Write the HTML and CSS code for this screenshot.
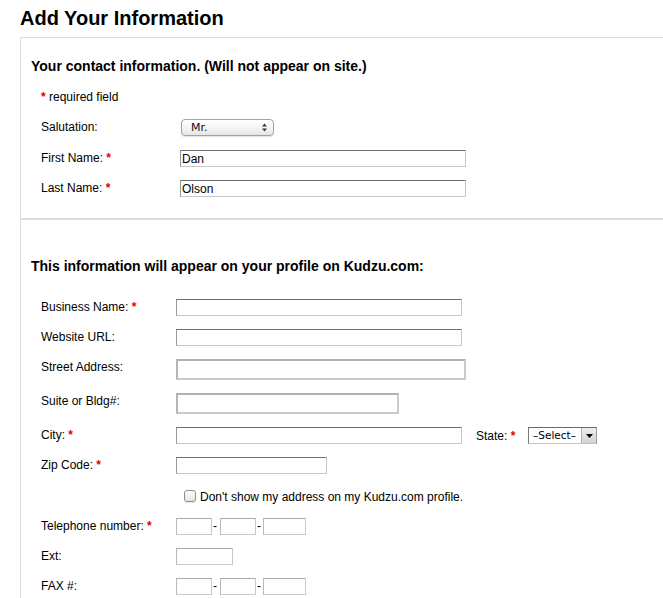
FILE: index.html
```html
<!DOCTYPE html>
<html lang="en">
<head>
<meta charset="utf-8">
<title>Add Your Information</title>
<link rel="stylesheet" href="styles.css">
</head>
<body>
<div class="page">
  <h1 class="title">Add Your Information</h1>
  <div class="panel">
    <section class="sec sec-contact">
      <h2 class="sec-title">Your contact information. (Will not appear on site.)</h2>
      <p class="req-note"><span class="req">*</span> required field</p>
      <div class="rows rows-contact">
        <div class="row row-17 gap-14">
          <span class="lbl">Salutation:</span>
          <div class="mac-select">
            <span class="mac-select-text">Mr.</span>
            <svg class="mac-arrows" width="5" height="9" viewBox="0 0 5 9"><path d="M0 3.6 L2.5 0.4 L5 3.6 Z M0 5.4 L2.5 8.6 L5 5.4 Z" fill="#3a3a3a"/></svg>
          </div>
        </div>
        <div class="row row-17">
          <span class="lbl">First Name: <span class="req">*</span></span>
          <input class="inp w286" type="text" value="Dan">
        </div>
        <div class="row row-17 last">
          <span class="lbl">Last Name: <span class="req">*</span></span>
          <input class="inp w286" type="text" value="Olson">
        </div>
      </div>
    </section>
    <section class="sec sec-profile">
      <h2 class="sec-title">This information will appear on your profile on Kudzu.com:</h2>
      <div class="rows rows-profile">
        <div class="row row-17">
          <span class="lbl">Business Name: <span class="req">*</span></span>
          <input class="inp w286" type="text">
        </div>
        <div class="row row-17">
          <span class="lbl">Website URL:</span>
          <input class="inp w286" type="text">
        </div>
        <div class="row row-21">
          <span class="lbl">Street Address:</span>
          <input class="inp inp-tall w290" type="text">
        </div>
        <div class="row row-21">
          <span class="lbl">Suite or Bldg#:</span>
          <input class="inp inp-tall w223" type="text">
        </div>
        <div class="row row-17">
          <span class="lbl">City: <span class="req">*</span></span>
          <input class="inp w286" type="text">
          <span class="lbl-state">State: <span class="req">*</span></span>
          <div class="win-select">
            <span class="win-select-text">&ndash;Select&ndash;</span>
            <span class="win-select-btn"><svg width="7" height="4" viewBox="0 0 7 4"><path d="M0 0 L7 0 L3.5 4 Z" fill="#000"/></svg></span>
          </div>
        </div>
        <div class="row row-17">
          <span class="lbl">Zip Code: <span class="req">*</span></span>
          <input class="inp w151" type="text">
        </div>
        <div class="row row-check">
          <span class="lbl"></span>
          <span class="check"></span>
          <span class="check-text">Don't show my address on my Kudzu.com profile.</span>
        </div>
        <div class="row row-17">
          <span class="lbl">Telephone number: <span class="req">*</span></span>
          <input class="inp inp-light w36" type="text"><span class="dash">-</span><input class="inp inp-light w36" type="text"><span class="dash dash-narrow">-</span><input class="inp inp-light w43" type="text">
        </div>
        <div class="row row-17">
          <span class="lbl">Ext:</span>
          <input class="inp inp-light w57" type="text">
        </div>
        <div class="row row-17">
          <span class="lbl">FAX #:</span>
          <input class="inp inp-light w36" type="text"><span class="dash">-</span><input class="inp inp-light w36" type="text"><span class="dash dash-narrow">-</span><input class="inp inp-light w43" type="text">
        </div>
      </div>
    </section>
  </div>
</div>
</body>
</html>
```
FILE: styles.css
```css
html, body {
  margin: 0;
  padding: 0;
  background: #fff;
  overflow: hidden;
}
body {
  font-family: "Liberation Sans", Arial, Helvetica, sans-serif;
  font-size: 12px;
  color: #000;
}
.page {
  padding-top: 6px;
}
.title {
  margin: 0 0 7px 20px;
  font-size: 20px;
  line-height: 24px;
  font-weight: bold;
}
.panel {
  margin-left: 20px;
  border-top: 1px solid #dcdcdc;
  border-left: 1px solid #dcdcdc;
}
.sec {
  padding-left: 10px;
}
.sec-contact {
  padding-top: 20px;
  padding-bottom: 21px;
  border-bottom: 2px solid #dcdcdc;
}
.sec-profile {
  padding-top: 38px;
  padding-bottom: 20px;
}
.sec-title {
  margin: 0;
  font-size: 14px;
  line-height: 16px;
  font-weight: bold;
}
.sec-contact .sec-title {
  margin-bottom: 15px;
}
.sec-profile .sec-title {
  margin-bottom: 25px;
}
.req-note {
  margin: 0 0 15px 10px;
  padding-top: 1px;
  line-height: 14px;
}
.req {
  color: #e00000;
  font-weight: bold;
}
.rows {
  margin-left: 10px;
  display: flex;
  flex-direction: column;
  gap: 13px;
}
.row {
  display: flex;
  align-items: flex-start;
}
.row-17 { height: 17px; }
.row-21 { height: 21px; }
.row-check {
  height: 18px;
  align-items: center;
}
.gap-14 { margin-bottom: 1px; }
.lbl {
  flex: none;
  padding-top: 1px;
  line-height: 14px;
}
.rows-contact .lbl { width: 139px; }
.rows-profile .lbl { width: 135px; }

.inp {
  box-sizing: border-box;
  height: 17px;
  margin: 0;
  padding: 0 1px;
  font-family: "Liberation Sans", Arial, Helvetica, sans-serif;
  font-size: 12px;
  color: #000;
  background: #fff;
  border-style: solid;
  border-width: 1px;
  border-color: #6e6e6e #c8c8c8 #c8c8c8 #9a9a9a;
  outline: none;
}
.inp-tall {
  height: 21px;
  border-width: 2px;
  border-color: #b2b2b2 #cacaca #cacaca #b6b6b6;
}
.inp-light {
  border-color: #a9a9a9 #c9c9c9 #c9c9c9 #b9b9b9;
}
.w286 { width: 286px; }
.w290 { width: 290px; }
.w223 { width: 223px; }
.w151 { width: 151px; }
.w36 { width: 36px; }
.w43 { width: 43px; }
.w57 { width: 57px; }

.dash {
  width: 8px;
  flex: none;
  line-height: 17px;
  padding-left: 1px;
  box-sizing: border-box;
}
.dash-narrow { width: 7px; }

.mac-select {
  box-sizing: border-box;
  width: 93px;
  height: 17px;
  margin-left: 1px;
  border: 1px solid #a3a3a3;
  border-radius: 4px;
  background: linear-gradient(#ffffff, #f2f2f2 60%, #e6e6e6);
  box-shadow: 0 1px 1px rgba(0,0,0,0.12);
  display: flex;
  align-items: center;
  justify-content: space-between;
  padding: 0 6px 0 9px;
}
.mac-select-text {
  font-family: "DejaVu Sans", Verdana, sans-serif;
  font-size: 11px;
  line-height: 13px;
  color: #111;
}
.mac-arrows { display: block; }

.lbl-state {
  margin-left: 14px;
  width: 52px;
  flex: none;
  padding-top: 1px;
  line-height: 16px;
}
.win-select {
  box-sizing: border-box;
  width: 69px;
  height: 17px;
  border-style: solid;
  border-width: 1px;
  border-color: #6a6a6a #9a9a9a #c4c4c4 #7a7a7a;
  background: #fff;
  display: flex;
  align-items: stretch;
}
.win-select-text {
  flex: 1;
  font-family: "DejaVu Sans", Verdana, sans-serif;
  font-size: 10.5px;
  line-height: 15px;
  padding-left: 4px;
  color: #000;
  white-space: nowrap;
}
.win-select-btn {
  flex: none;
  width: 14px;
  border-left: 1px solid #b0b0b0;
  background: linear-gradient(#eeeeee, #d2d2d2);
  display: flex;
  align-items: center;
  justify-content: center;
}
.win-select-btn svg { display: block; }

.check {
  box-sizing: border-box;
  flex: none;
  width: 12px;
  height: 12px;
  margin-left: 8px;
  margin-right: 4px;
  border: 1px solid #8e8e8e;
  border-radius: 3px;
  background: linear-gradient(#ffffff, #e4e4e4);
  box-shadow: 0 1px 1px rgba(0,0,0,0.1);
}
.row-check .lbl { width: 135px; }
.check-text {
  padding-top: 1px;
  line-height: 14px;
}
```
